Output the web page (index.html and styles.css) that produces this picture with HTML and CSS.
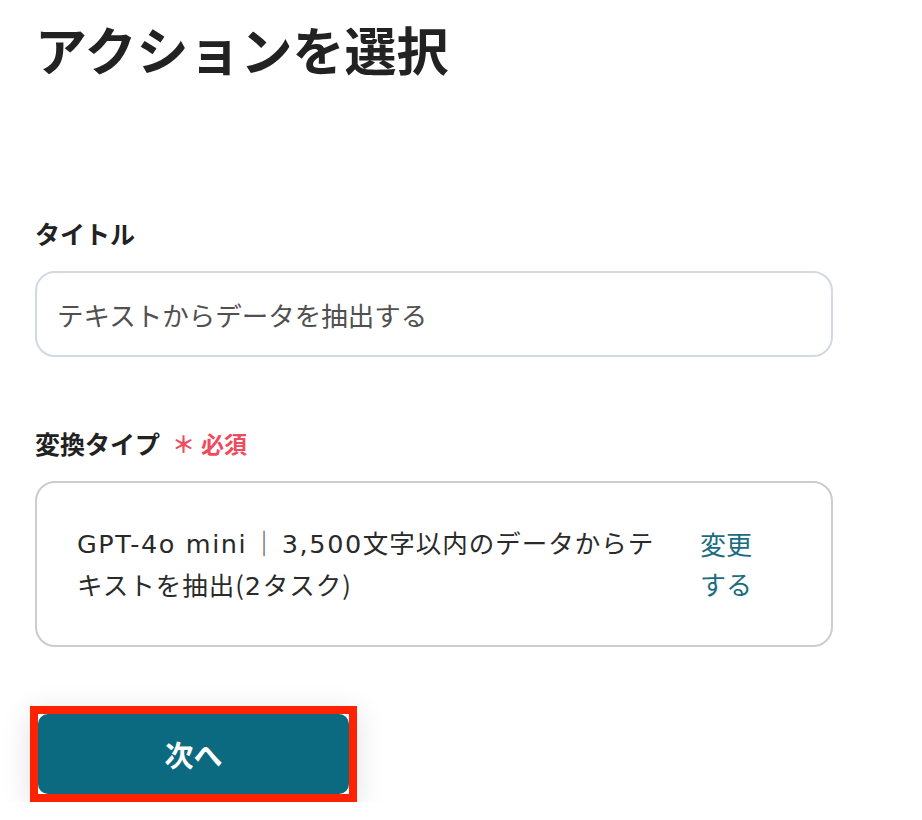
FILE: index.html
```html
<!DOCTYPE html>
<html lang="ja">
<head>
<meta charset="utf-8">
<title>アクションを選択</title>
<link rel="stylesheet" href="styles.css">
</head>
<body>
<main class="page">
  <h1 class="title">アクションを選択</h1>

  <section class="field field-title">
    <label class="label">タイトル</label>
    <div class="input">テキストからデータを抽出する</div>
  </section>

  <section class="field field-type">
    <div class="label">変換タイプ<span class="required"><span class="ast">＊</span>必須</span></div>
    <div class="select-box">
      <p class="select-text"><span class="latin">GPT-4o mini</span><span class="bar">｜</span><span class="latin">3,500</span>文字以内のデータからテ<br>キストを抽出(<span class="latin">2</span>タスク)</p>
      <a class="change-link">変更する</a>
    </div>
  </section>

  <div class="actions">
    <div class="highlight">
      <button class="next-btn">次へ</button>
    </div>
  </div>
</main>
</body>
</html>
```

FILE: styles.css
```css
* { box-sizing: border-box; }

html, body {
  margin: 0;
  padding: 0;
  background: #ffffff;
}

body {
  font-family: "Noto Sans CJK JP", "Noto Sans", sans-serif;
  color: #222222;
}

.page {
  width: 833px;
  padding-left: 35px;
}

.title {
  margin: 13px 0 0 0;
  font-size: 52px;
  line-height: 72px;
  font-weight: 700;
  color: #222222;
}

.field-title {
  margin-top: 131px;
}

.field-type {
  margin-top: 69px;
}

.label {
  display: flex;
  align-items: center;
  font-size: 25px;
  line-height: 34px;
  font-weight: 700;
  color: #222222;
  margin-bottom: 21px;
}

.required {
  color: #ef4a5e;
  font-size: 23px;
  font-weight: 700;
  margin-left: 12px;
}

.ast {
  font-weight: 700;
  margin-right: 6px;
}

.input {
  height: 86px;
  border: 2px solid #d3d9e2;
  border-radius: 20px;
  padding: 0 20px;
  display: flex;
  align-items: center;
  font-size: 26.5px;
  color: #505050;
}

.select-box {
  height: 166px;
  border: 2px solid #cccccc;
  border-radius: 20px;
  padding: 0 40px;
  display: flex;
  align-items: center;
  gap: 23px;
}

.select-text {
  margin: 0;
  width: 600px;
  font-size: 25.5px;
  letter-spacing: 1px;
  line-height: 40px;
  color: #2a2a2a;
}

.latin {
  font-family: "DejaVu Sans", "Noto Sans", sans-serif;
  font-size: 25.5px;
  letter-spacing: 1.6px;
}

.bar {
  display: inline-block;
  margin: 0 4px;
  color: #555555;
}

.change-link {
  width: 56px;
  font-size: 26px;
  line-height: 40px;
  color: #1b6c82;
}

.actions {
  margin-top: 59px;
  margin-left: -5px;
}

.highlight {
  display: inline-block;
  border: 8px solid #ff2200;
  background: #ffffff;
  box-shadow: 0 6px 28px rgba(0, 0, 0, 0.12);
}

.next-btn {
  display: block;
  width: 311px;
  height: 80px;
  border: none;
  border-radius: 10px;
  background: #0b6a80;
  color: #ffffff;
  font-family: "Noto Sans CJK JP", "Noto Sans", sans-serif;
  font-size: 29px;
  font-weight: 700;
  cursor: pointer;
}
```
